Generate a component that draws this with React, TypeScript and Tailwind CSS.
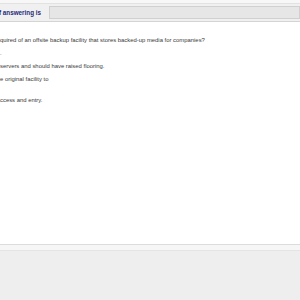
const lines: { text: string; h: string }[] = [
	{ text: "quired of an offsite backup facility that stores backed-up media for companies?", h: "h-[13px]" },
	{ text: ".", h: "h-[13px]" },
	{ text: "servers and should have raised flooring.", h: "h-[13px]" },
	{ text: "e original facility to", h: "h-[13px]" },
	{ text: "", h: "h-[8px]" },
	{ text: "ccess and entry.", h: "h-[13px]" },
];

const App = () => {
	return (
		<div
			className="w-[300px] h-[300px] flex flex-col bg-white overflow-hidden"
			style={{ fontFamily: '"Liberation Sans", Arial, sans-serif' }}
		>
			<div className="h-[22px] flex-shrink-0 bg-[#f0f0f0] border-b border-[#d4d4d4] flex flex-col">
				<div className="h-[4px] bg-[#f7f7f7] border-b border-[#e2e2e2]" />
				<div className="flex items-center gap-[8px] h-[17px]">
					<span className="text-[6.3px] font-bold text-[#1f2a7a] whitespace-nowrap ml-[-1px]">
						f answering is
					</span>
					<div className="flex-1 h-[13px] bg-[#e6e6e6] border border-[#d0d0d0]" />
				</div>
			</div>
			<div className="flex-1 flex flex-col pt-[12px] text-[5.9px] text-[#3a3a3a] leading-[13px]">
				{lines.map((l, i) => (
					<div key={i} className={`${l.h} whitespace-nowrap`}>
						{l.text}
					</div>
				))}
			</div>
			<div className="h-[56px] flex-shrink-0 bg-[#eeeeee] border-t border-[#dcdcdc] flex flex-col">
				<div className="h-[6px] bg-[#f6f6f6] border-b border-[#e4e4e4]" />
			</div>
		</div>
	);
};

export default App;
